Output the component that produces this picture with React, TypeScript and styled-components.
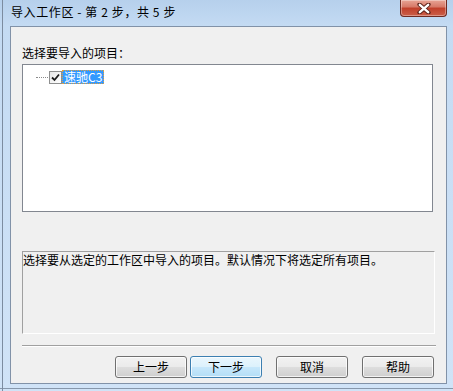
import * as React from 'react';
import styled, { createGlobalStyle } from 'styled-components';

const GlobalStyle = createGlobalStyle`
  html, body {
    margin: 0;
    padding: 0;
    background: #cfe2f7;
  }
  body {
    font-family: "Noto Sans CJK SC", "Noto Sans", sans-serif;
    font-size: 12px;
    color: #000;
  }
`;

const Frame = styled.div`
  box-sizing: border-box;
  width: 453px;
  height: 391px;
  display: flex;
  flex-direction: column;
  padding: 0 6px 7px 10px;
  background:
    linear-gradient(90deg, transparent 0 2px, #7c8ca0 2px 3px, transparent 3px),
    linear-gradient(0deg, transparent 0 2px, #8797ab 2px 3px, transparent 3px),
    linear-gradient(180deg, #b6d0ec 0, #c4dbf3 26px, #d0e3f7 100%);
`;

const TitleBar = styled.div`
  height: 26px;
  flex: none;
  display: flex;
  align-items: flex-start;
  justify-content: space-between;
`;

const Title = styled.div`
  margin: 4px 0 0 1px;
  line-height: 16px;
  font-size: 12px;
  letter-spacing: 0.6px;
  color: #000;
`;

const CloseButton = styled.div`
  box-sizing: border-box;
  width: 47px;
  height: 17px;
  border: 1px solid #6e2a22;
  border-top: none;
  border-radius: 0 0 4px 4px;
  background: linear-gradient(180deg, #e8a495 0%, #d77a69 42%, #c1402b 52%, #cb5f49 100%);
  box-shadow: inset 0 0 0 1px rgba(255, 255, 255, 0.35);
  display: flex;
  align-items: center;
  justify-content: center;
`;

const Client = styled.div`
  flex: 1;
  box-sizing: border-box;
  border: 1px solid #8192a8;
  background: #f0f0f0;
  display: flex;
  flex-direction: column;
  padding: 18px 0 0 11px;
`;

const Label = styled.div`
  line-height: 16px;
  margin-bottom: 3px;
`;

const TreeBox = styled.div`
  box-sizing: border-box;
  width: 411px;
  height: 148px;
  border: 1px solid #828790;
  background: #fff;
  padding: 5px 0 0 13px;
`;

const TreeRow = styled.div`
  display: flex;
  align-items: center;
  height: 14px;
`;

const TreeLine = styled.span`
  width: 12px;
  height: 0;
  border-top: 1px dotted #8a8a8a;
  margin-right: 1px;
`;

const CheckBox = styled.span`
  box-sizing: border-box;
  width: 13px;
  height: 13px;
  border: 1px solid #8e8f8f;
  background: linear-gradient(135deg, #e6e6e6 0%, #ffffff 100%);
  display: flex;
  align-items: center;
  justify-content: center;
`;

const ItemText = styled.span`
  box-sizing: border-box;
  height: 14px;
  line-height: 12px;
  padding: 0 1px;
  background: #3399ff;
  color: #fff;
  border: 1px dotted #e0a040;
`;

const Description = styled.div`
  box-sizing: border-box;
  width: 413px;
  height: 83px;
  margin-top: 39px;
  border-top: 1px solid #a0a0a0;
  border-left: 1px solid #a0a0a0;
  border-right: 1px solid #fff;
  border-bottom: 1px solid #fff;
  line-height: 16px;
`;

const Separator = styled.div`
  width: 414px;
  height: 0;
  margin-top: 11px;
  border-top: 1px solid #a0a0a0;
  border-bottom: 1px solid #fff;
`;

const ButtonRow = styled.div`
  width: 414px;
  margin-top: 9px;
  display: flex;
  justify-content: flex-end;
  gap: 14px;
  padding-right: 2px;
  box-sizing: border-box;
`;

const NavGroup = styled.div`
  display: flex;
  gap: 3px;
`;

const Button = styled.button<{ $focused?: boolean }>`
  box-sizing: border-box;
  width: 72px;
  height: 22px;
  padding: 0;
  font-family: "Noto Sans CJK SC", "Noto Sans", sans-serif;
  font-size: 12px;
  line-height: 16px;
  color: #000;
  border: 1px solid ${(p) => (p.$focused ? '#3c7fb1' : '#707070')};
  border-radius: 3px;
  background: ${(p) =>
    p.$focused
      ? 'linear-gradient(180deg, #eaf6fd 0%, #dcf1fc 48%, #c6e7fb 52%, #b3def6 100%)'
      : 'linear-gradient(180deg, #f2f2f2 0%, #ebebeb 48%, #dddddd 52%, #cfcfcf 100%)'};
  box-shadow: inset 0 0 0 1px rgba(255, 255, 255, 0.75);
`;

const CloseGlyph = () => (
  <svg width="14" height="11" viewBox="0 0 14 11">
    <path d="M2.5 1.5 L11.5 9.5 M11.5 1.5 L2.5 9.5" stroke="#5a2018" strokeWidth="4.2" strokeLinecap="round" />
    <path d="M2.8 1.8 L11.2 9.2 M11.2 1.8 L2.8 9.2" stroke="#fff" strokeWidth="2.4" strokeLinecap="round" />
  </svg>
);

const CheckMark = () => (
  <svg width="9" height="9" viewBox="0 0 9 9">
    <path d="M1 4.5 L3.5 7 L8 1.5" fill="none" stroke="#1a1a1a" strokeWidth="1.8" />
  </svg>
);

export default function App() {
  return (
    <>
      <GlobalStyle />
      <Frame>
        <TitleBar>
          <Title>导入工作区 - 第 2 步，共 5 步</Title>
          <CloseButton>
            <CloseGlyph />
          </CloseButton>
        </TitleBar>
        <Client>
          <Label>选择要导入的项目：</Label>
          <TreeBox>
            <TreeRow>
              <TreeLine />
              <CheckBox>
                <CheckMark />
              </CheckBox>
              <ItemText>速驰C3</ItemText>
            </TreeRow>
          </TreeBox>
          <Description>选择要从选定的工作区中导入的项目。默认情况下将选定所有项目。</Description>
          <Separator />
          <ButtonRow>
            <NavGroup>
              <Button>上一步</Button>
              <Button $focused>下一步</Button>
            </NavGroup>
            <Button>取消</Button>
            <Button>帮助</Button>
          </ButtonRow>
        </Client>
      </Frame>
    </>
  );
}
